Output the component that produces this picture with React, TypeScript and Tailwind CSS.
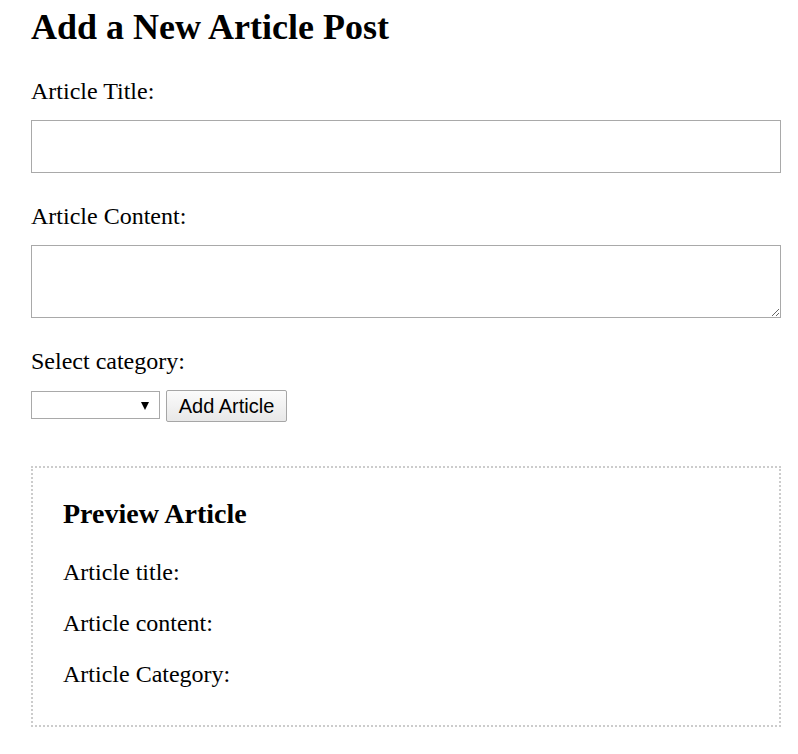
import { useState } from 'react';

export default function App() {
  const [title, setTitle] = useState('');
  const [content, setContent] = useState('');
  const [category, setCategory] = useState('');

  return (
    <div className="min-h-screen bg-white text-black font-['Liberation_Serif','Times_New_Roman',serif]">
      <div className="w-[750px] ml-[31px] pt-[6px] pb-[27px] flex flex-col">
        <h1 className="text-[36px] leading-[42px] font-bold">Add a New Article Post</h1>

        {/* Formulaire */}
        <label className="mt-[29px] text-[24px] leading-[28px]">Article Title:</label>
        <input
          type="text"
          value={title}
          onChange={(e) => setTitle(e.target.value)}
          className="mt-[15px] h-[53px] w-full border border-[#a9a9a9] bg-white px-2 outline-none"
        />

        <label className="mt-[29px] text-[24px] leading-[28px]">Article Content:</label>
        <textarea
          value={content}
          onChange={(e) => setContent(e.target.value)}
          className="mt-[15px] h-[73px] w-full border border-[#a9a9a9] bg-white px-2 outline-none block"
        />

        <label className="mt-[29px] text-[24px] leading-[28px]">Select category:</label>
        <div className="mt-[15px] flex items-center gap-[6px]">
          <div className="relative">
            <select
              value={category}
              onChange={(e) => setCategory(e.target.value)}
              className="appearance-none h-[28px] w-[129px] border border-[#a9a9a9] bg-white outline-none font-['Liberation_Sans',Arial,sans-serif] text-[20px]"
            >
              <option value=""></option>
              <option value="tech">Tech</option>
              <option value="news">News</option>
            </select>
            <span className="pointer-events-none absolute right-[11px] top-[11px] w-0 h-0 border-l-[4px] border-r-[4px] border-t-[8px] border-l-transparent border-r-transparent border-t-black" />
          </div>
          <button className="h-[32px] w-[121px] border border-[#a6a6a6] rounded-[2px] bg-gradient-to-b from-[#fbfbfb] to-[#e8e8e8] font-['Liberation_Sans',Arial,sans-serif] text-[20px] leading-[30px] text-black">
            Add Article
          </button>
        </div>

        {/* Aperçu */}
        <div className="mt-[44px] border-2 border-dotted border-[#cccccc] px-[30px] pt-[30px] pb-[37px]">
          <h3 className="text-[28px] leading-[32px] font-bold">Preview Article</h3>
          <p className="mt-[28px] text-[24px] leading-[28px]">Article title: {title}</p>
          <p className="mt-[23px] text-[24px] leading-[28px]">Article content: {content}</p>
          <p className="mt-[23px] text-[24px] leading-[28px]">Article Category: {category}</p>
        </div>
      </div>
    </div>
  );
}
